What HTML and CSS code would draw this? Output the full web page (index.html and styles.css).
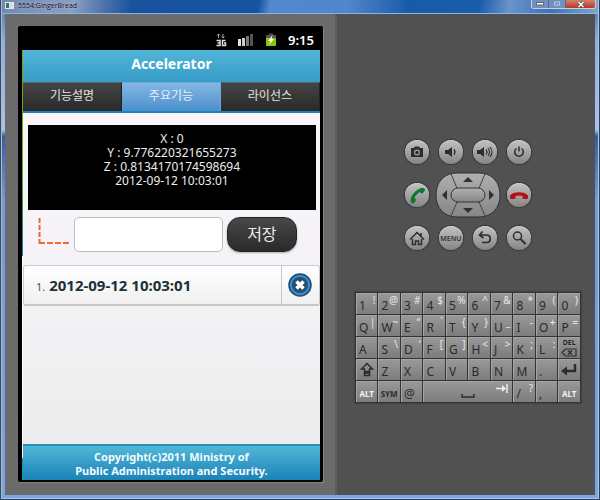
FILE: index.html
```html
<!DOCTYPE html>
<html lang="ko">
<head>
<meta charset="utf-8">
<title>5554:GingerBread</title>
<link rel="stylesheet" href="styles.css">
</head>
<body>
<div class="window">
  <header class="titlebar">
    <span class="app-icon"></span>
    <span class="title">5554:GingerBread</span>
    <div class="controls">
      <button class="control" aria-label="Minimize"><svg width="8" height="4" viewBox="0 0 8 4"><rect x=".5" y=".5" width="7" height="2.5" fill="#fff" stroke="#667"/></svg></button>
      <button class="control" aria-label="Maximize"><svg width="8" height="6" viewBox="0 0 8 6"><rect x="1.5" y="1" width="5" height="3" fill="none" stroke="#b9c6e0"/></svg></button>
      <button class="control close" aria-label="Close"><svg width="8" height="7" viewBox="0 0 8 7"><path d="M1.5 1l5 5M6.500 1l-5 5" stroke="#544" stroke-width="3"/><path d="M1.500 1l5 5M6.500 1l-5 5" stroke="#fff" stroke-width="1.600"/></svg></button>
    </div>
  </header>
  <main class="emulator">
    <section class="device">
      <div class="phone">
        <div class="status">
          <svg width="12" height="14" viewBox="0 0 12 14"><path d="M3.500 5V1M2 2.500L3.500 1 5 2.500M8 1v4M6.500 3.500L8 5l1.500-1.500" fill="none" stroke="#aaa"/><path d="M1.500 7.500H5v5H1.500M2.500 10H5M10.500 7.500H7.500v5h3V10H9" fill="none" stroke="#ddd" stroke-width="1.500"/></svg>
          <svg width="16" height="14" viewBox="0 0 16 14"><path d="M0 6h3v7H0z" fill="#e2e2e2"/><path d="M4 5h3v8H4z" fill="#cfcfcf"/><path d="M8 3h3v10H8z" fill="#777"/><path d="M12 1h3v12h-3z" fill="#555"/></svg>
          <svg width="12" height="14" viewBox="0 0 12 14"><path d="M1 2h3V.5h4V2h3v11H1z" fill="#555"/><path d="M1 5h10v8H1z" fill="#84c60a"/><path d="M7.500 2L3 8h2.500L4 12l5-6H6.500z" fill="#fff"/></svg>
          <time class="clock">9:15</time>
        </div>
        <div class="screen">
          <h1 class="app-title">Accelerator</h1>
          <nav class="tabs">
            <a class="tab" href="#about">기능설명</a>
            <a class="tab active" href="#main">주요기능</a>
            <a class="tab" href="#license">라이선스</a>
          </nav>
          <div class="content">
            <p class="readout">X : 0<br>Y : 9.776220321655273<br>Z : 0.8134170174598694<br>2012-09-12 10:03:01</p>
            <form class="save">
              <svg class="elbow" width="32" height="28" viewBox="0 0 32 28"><path d="M1.500 0v27" stroke="#ee6a32" stroke-width="2" stroke-dasharray="5 2" fill="none"/><path d="M1 25H31" stroke="#ee6a32" stroke-width="2" stroke-dasharray="6 2" fill="none"/></svg>
              <input class="name" type="text" aria-label="이름">
              <button class="submit" type="button">저장</button>
            </form>
            <div class="row">
              <span class="entry"><span class="index">1.</span> <b>2012-09-12 10:03:01</b></span>
              <button class="remove" aria-label="삭제"><svg width="26" height="26" viewBox="0 0 26 26"><circle cx="13" cy="13" r="11" fill="#3f8ac6" stroke="#194b75" stroke-width="1.500"/><circle cx="13" cy="13" r="8" fill="#24506f"/><path d="M9.500 9.500l7 7M16.500 9.500l-7 7" stroke="#fff" stroke-width="3.500"/></svg></button>
            </div>
          </div>
          <footer class="copyright">Copyright(c)2011 Ministry of<br>Public Administration and Security.</footer>
        </div>
      </div>
    </section>
    <section class="hardware">
      <div class="pad">
        <div class="pad-row">
          <button class="round" aria-label="Camera"><svg width="24" height="24" viewBox="0 0 24 24"><path fill="#2d2d2d" fill-rule="evenodd" d="M6 8h3l1-1.500h4L15 8h3v9H6zM12 9.500a3 3 0 1 0 0 6 3 3 0 0 0 0-6z"/><circle cx="12" cy="12.500" r="1.800" fill="#2d2d2d"/></svg></button>
          <button class="round" aria-label="Volume down"><svg width="24" height="24" viewBox="0 0 24 24"><path fill="#2d2d2d" d="M6 10h3l4-3v10l-4-3H6z"/><path d="M15 9.500q2 2.500 0 5" fill="none" stroke="#2d2d2d" stroke-width="1.300"/></svg></button>
          <button class="round" aria-label="Volume up"><svg width="24" height="24" viewBox="0 0 24 24"><path fill="#2d2d2d" d="M4 10h3l4-3v10l-4-3H4z"/><path d="M13 9.500q2 2.500 0 5M15 8q3 4 0 8M17 7q4 5 0 10" fill="none" stroke="#2d2d2d" stroke-width="1.100"/></svg></button>
          <button class="round" aria-label="Power"><svg width="24" height="24" viewBox="0 0 24 24"><path d="M9.500 8.500a4.300 4.300 0 1 0 5 0M12 6.500v5" fill="none" stroke="#2d2d2d" stroke-width="1.500"/></svg></button>
        </div>
        <div class="pad-row">
          <button class="round" aria-label="Call"><svg width="24" height="24" viewBox="0 0 24 24"><g transform="rotate(-48 12 12)"><path d="M2.500 14.500v-2.500C6 7 18 7 21.500 12v2.500q-2.500 1.500-5.500 0V12q-4-1-8 0v2.500q-3 1.500-5.500 0z" fill="#0d7930"/></g></svg></button>
          <div class="dpad">
            <svg class="dpad-art" width="66" height="46" viewBox="0 0 66 46"><defs><linearGradient id="metal" x2="0" y2="1"><stop stop-color="#b0b0b0"/><stop offset="1" stop-color="#858585"/></linearGradient></defs><path d="M22 1h22C57 1 65 10 65 23S57 45 44 45H22C9 45 1 36 1 23S9 1 22 1z" fill="url(#metal)" stroke="#303030"/><path d="M16 2l6 14M50 2l-6 14M16 44l6-14M50 44l-6-14" stroke="#444" fill="none"/><rect x="16" y="16" width="34" height="14" rx="7" fill="url(#metal)" stroke="#333"/><path d="M28 10h10l-5-5zM28 36h10l-5 5zM12 18v10l-5-5zM54 18v10l5-5z" fill="#303030"/></svg>
            <button class="up" aria-label="Up"></button><button class="left" aria-label="Left"></button><button class="center" aria-label="Select"></button><button class="right" aria-label="Right"></button><button class="down" aria-label="Down"></button>
          </div>
          <button class="round" aria-label="End call"><svg width="24" height="24" viewBox="0 0 24 24"><path d="M3 15.500v-3C6 8 18 8 21 12.500v3q-2.500 1-5.500 0V13q-3.500-1-7 0v2.500q-3 1-5.500 0z" fill="#b90f16"/></svg></button>
        </div>
        <div class="pad-row">
          <button class="round" aria-label="Home"><svg width="24" height="24" viewBox="0 0 24 24"><path d="M5 13.500l7-7 7 7M16 7v3M7.500 13v5.500h3V15h3v3.500h3V13" fill="none" stroke="#2d2d2d" stroke-width="1.500"/></svg></button>
          <button class="round menu">MENU</button>
          <button class="round" aria-label="Back"><svg width="24" height="24" viewBox="0 0 24 24"><path d="M9.500 5.500l-3 3.500 4 3M7 9h6.500c5 0 5 7.500 0 7.500H9" fill="none" stroke="#2d2d2d" stroke-width="1.700"/></svg></button>
          <button class="round" aria-label="Search"><svg width="24" height="24" viewBox="0 0 24 24"><circle cx="10.500" cy="10" r="4" fill="none" stroke="#2d2d2d" stroke-width="1.500"/><path d="M13.500 13l5 5" stroke="#2d2d2d" stroke-width="2"/></svg></button>
        </div>
      </div>
      <div class="keyboard">
        <button class="key">1<i>!</i></button><button class="key">2<i>@</i></button><button class="key">3<i>#</i></button><button class="key">4<i>$</i></button><button class="key">5<i>%</i></button><button class="key">6<i>^</i></button><button class="key">7<i>&amp;</i></button><button class="key">8<i>*</i></button><button class="key">9<i>(</i></button><button class="key">0<i>)</i></button>
        <button class="key">Q<i>|</i></button><button class="key">W<i>~</i></button><button class="key">E<i>“</i></button><button class="key">R<i>`</i></button><button class="key">T<i>{</i></button><button class="key">Y<i>}</i></button><button class="key">U<i>_</i></button><button class="key">I<i>-</i></button><button class="key">O<i>+</i></button><button class="key">P<i>=</i></button>
        <button class="key">A</button><button class="key">S<i>\</i></button><button class="key">D<i>‘</i></button><button class="key">F<i>[</i></button><button class="key">G<i>]</i></button><button class="key">H<i>&lt;</i></button><button class="key">J<i>&gt;</i></button><button class="key">K<i>;</i></button><button class="key">L<i>:</i></button>
        <button class="key stacked"><span>DEL</span><svg width="16" height="9" viewBox="0 0 16 9"><path d="M1 4.500L4.500 1H15v7H4.500zM7 2.500l4 4M11 2.500l-4 4" fill="none" stroke="#2d2d2d" stroke-width="1.200"/></svg></button>
        <button class="key symbol" aria-label="Shift"><svg width="14" height="15" viewBox="0 0 14 15"><path d="M7 1.500l5.500 5.500h-3v2.500h-5V7h-3zM4.500 11h5v2.500h-5z" fill="none" stroke="#2d2d2d" stroke-width="1.500"/></svg></button>
        <button class="key">Z</button><button class="key">X</button><button class="key">C</button><button class="key">V</button><button class="key">B</button><button class="key">N</button><button class="key">M</button><button class="key">.</button>
        <button class="key symbol" aria-label="Enter"><svg width="16" height="14" viewBox="0 0 16 14"><path d="M14 1v7H5" fill="none" stroke="#2d2d2d" stroke-width="2.500"/><path d="M0 8l6-4.500v9z" fill="#2d2d2d"/></svg></button>
        <button class="key word light">ALT</button><button class="key word">SYM</button><button class="key">@</button>
        <button class="key space" aria-label="Space"><svg width="14" height="5" viewBox="0 0 14 5"><path d="M1 0v3h12V0" fill="none" stroke="#2d2d2d" stroke-width="1.500"/></svg><svg class="tabkey" width="12" height="9" viewBox="0 0 12 9"><path d="M0 4.500h8M11 0v9" stroke="#eee" stroke-width="1.500"/><path d="M6 1l4 3.500L6 8z" fill="#eee"/></svg></button>
        <button class="key">/<i>?</i></button><button class="key">,</button><button class="key word light">ALT</button>
      </div>
    </section>
  </main>
</div>
</body>
</html>
```
FILE: styles.css
```css
* { box-sizing: border-box; }
body { margin: 0; font-family: "Noto Sans", "Noto Sans CJK KR", sans-serif; }
button { border: 0; padding: 0; margin: 0; background: none; font: inherit; color: inherit; }
svg { display: block; flex: none; }
a { text-decoration: none; }

.window {
  display: flex;
  flex-direction: column;
  min-height: 100vh;
  padding: 0 5px 5px;
  background: linear-gradient(#4570ad, #8caee0 40px, #a9c2e8 130px, #3060a0 136px, #6f9dda 200px, #78a6e2);
  box-shadow: inset 1px 0 #3d4859, inset -1px -1px #343d4a, inset 2px 0 #a9bbd4, inset -2px -2px #a9c6ee;
}
.titlebar {
  display: flex;
  align-items: flex-start;
  gap: 4px;
  height: 14px;
  margin: 0 -3px;
  padding-left: 3px;
  border-bottom: 1px solid #88b4ec;
  background: linear-gradient(100deg, #7488ae, #8c9fc2 12%, #5074ac 17%, #16529d 22%, #17549f 43%, #5488cc 45%, #5186cb 58%, #1a5ba9 68%, #1a5dab 80%, #6a93cb 85%, #3d72b6 92%, #87a3ca);
}
.app-icon {
  width: 9px;
  height: 7px;
  margin-top: 2px;
  border: 1px solid #e5e9ef;
  background: linear-gradient(90deg, #278067 50%, #d5dce5 50%);
}
.title { flex: 1; font: 7px/11px "Open Sans", sans-serif; color: #0c1420; text-shadow: 0 0 3px #c8d4e6; }
.controls { display: flex; margin-right: 2px; border: 1px solid #c3d2ea; border-top: 0; border-radius: 0 0 3px 3px; overflow: hidden; }
.control { display: flex; align-items: center; justify-content: center; width: 17px; height: 8px; background: #7290bd; border-right: 1px solid #4d6b99; }
.close { width: 29px; border: 0; background: linear-gradient(#d18373, #bd3520); }

.emulator { flex: 1; display: grid; grid-template-columns: minmax(0, 9fr) minmax(0, 7fr); }
.device { display: flex; padding: 12px 12px 13px 13px; background: #6b6b6b; border-right: 2px solid #5d5d5d; }
.phone { flex: 1; min-width: 0; display: flex; flex-direction: column; padding: 0 3px 2px 4px; background: #000; border-radius: 2px; box-shadow: 1px 1px 1px #858585; }
.status { display: flex; align-items: center; justify-content: flex-end; gap: 11px; height: 24px; padding: 4px 6px 0 0; }
.clock { font-size: 13px; line-height: 18px; font-weight: 600; color: #fff; }
.screen {
  flex: 1;
  display: flex;
  flex-direction: column;
  padding-left: 1px;
  background: linear-gradient(#7fa800, #5fa51a 30%, #0878b0 48%, #fff 48%, #fff 95%, #08a0a0 95%);
}
.app-title { margin: 0; height: 32px; font-size: 14px; line-height: 27px; font-weight: 700; text-align: center; color: #fff; background: linear-gradient(#52b6d8, #369cc8); }
.tabs { display: grid; grid-template-columns: repeat(3, 1fr); border-bottom: 2px solid #1884be; }
.tab { height: 29px; font-size: 12px; line-height: 26px; text-align: center; color: #e4e4e4; background: linear-gradient(#444, #2a2a2a); border-top: 1px solid #58626a; border-right: 1px solid #222; }
.tab.active { color: #e6f0f6; background: linear-gradient(#83b8e5, #4c8fcb); border-color: #71a9d9; }
.content { flex: 1; padding-top: 12px; background: linear-gradient(#f8f6fa, #f5f3f7 45%, #ececec); }
.readout { margin: 0 4px 0 5px; height: 85px; padding-top: 7px; font-size: 12px; line-height: 14px; text-align: center; color: #ededed; background: #000; }
.save { display: flex; align-items: center; gap: 4px; height: 55px; padding: 0 23px 6px 15px; }
.elbow { margin-bottom: 6px; }
.name { flex: 1; min-width: 0; height: 35px; border: 1px solid #bdbdbd; border-radius: 5px; background: #fff; }
.submit { width: 70px; height: 35px; border: 1px solid #222; border-radius: 13px; font-size: 16px; line-height: 31px; color: #eee; background: linear-gradient(#484848, #2a2a2a); box-shadow: 0 1px 2px #aaa; }
.row { display: flex; height: 41px; border: 1px solid #cbcbcb; border-bottom: 2px solid #c5c5c5; border-radius: 3px; background: linear-gradient(#fff, #f0f0f0); }
.entry { flex: 1; padding-left: 12px; font-size: 15px; line-height: 38px; white-space: nowrap; color: #1c3038; }
.index { font-size: 11px; color: #4a5357; }
.remove { display: flex; align-items: center; justify-content: center; width: 38px; border-left: 1px solid #c8c8c8; }
.copyright { height: 36px; padding-top: 4px; border-top: 2px solid #2590ba; font-size: 11px; line-height: 14px; font-weight: 700; text-align: center; color: #f2fbff; background: linear-gradient(#51b7d7, #1b82b8); }

.hardware { display: flex; flex-direction: column; align-items: center; gap: 42px; padding: 126px 14px 0 18px; background: #515151; }
.pad { display: flex; flex-direction: column; gap: 8px; }
.pad-row { display: flex; align-items: center; justify-content: space-between; width: 126px; }
.round { width: 24px; height: 24px; border-radius: 50%; background: linear-gradient(#c2c2c2, #858585); box-shadow: 0 0 1px 1px #383838, inset 0 1px #c9c9c9; }
.menu { font-size: 7px; font-weight: 600; color: #333; }
.dpad { position: relative; display: grid; grid-template: 16px 14px 16px / 16px 34px 16px; grid-template-areas: ". up ." "left center right" ". down ."; }
.dpad-art { position: absolute; inset: 0; pointer-events: none; }
.up { grid-area: up; }
.left { grid-area: left; }
.center { grid-area: center; }
.right { grid-area: right; }
.down { grid-area: down; }

.keyboard { align-self: stretch; display: grid; grid-template-columns: repeat(10, minmax(0, 1fr)); grid-auto-rows: 21px; gap: 1px; padding: 1px; background: #343434; box-shadow: 0 0 1px 1px #444; }
.key { display: flex; align-items: flex-end; justify-content: space-between; padding: 0 1px 0 3px; font-size: 12px; line-height: 17px; color: #2a2a2a; background: linear-gradient(#999, #7c7c7c); box-shadow: inset 1px 1px #a5a5a5; }
.key i { align-self: flex-start; padding-right: 1px; font-size: 10px; line-height: 14px; font-style: normal; color: #e8e8e8; }
.key.word { align-items: center; justify-content: center; padding: 4px 0 0; font-size: 8px; line-height: 11px; font-weight: 700; }
.key.light { color: #f2f2f2; }
.key.symbol { align-items: center; justify-content: center; padding: 0; }
.key.stacked { flex-direction: column; align-items: center; justify-content: center; gap: 1px; padding: 0; font-size: 7px; line-height: 8px; font-weight: 700; }
.key.space { grid-column: span 4; position: relative; justify-content: center; padding: 0 0 3px; }
.tabkey { position: absolute; top: 3px; right: 4px; }
```
